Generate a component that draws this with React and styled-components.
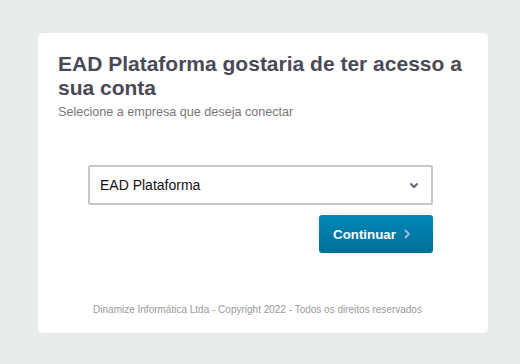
import React from 'react'
import styled, { createGlobalStyle } from 'styled-components'

const Global = createGlobalStyle`
  html, body {
    margin: 0;
    padding: 0;
    background: #e9eced;
    font-family: "Liberation Sans", Arial, sans-serif;
  }
`

const Page = styled.div`
  width: 520px;
  height: 364px;
  padding: 33px 32px 0 38px;
  box-sizing: border-box;
`

const Card = styled.div`
  width: 450px;
  height: 300px;
  background: #fff;
  border-radius: 5px;
  box-sizing: border-box;
  padding: 19px 20px 0 20px;
  display: flex;
  flex-direction: column;
`

const Title = styled.h1`
  margin: 0;
  font-size: 21px;
  line-height: 24px;
  font-weight: bold;
  color: #4a4a57;
`

const Subtitle = styled.p`
  margin: 5px 0 0;
  font-size: 12.6px;
  line-height: 15px;
  color: #777;
`

const Form = styled.div`
  margin: 45px 35px 0 30px;
  display: flex;
  flex-direction: column;
  align-items: flex-end;
`

const Select = styled.div`
  align-self: stretch;
  height: 40px;
  box-sizing: border-box;
  border: 2px solid #c4c8cc;
  border-radius: 2px;
  display: flex;
  align-items: center;
  justify-content: space-between;
  padding: 0 12px 0 10px;
  font-size: 14px;
  color: #111;
`

const Button = styled.button`
  margin-top: 10px;
  width: 114px;
  height: 38px;
  border: none;
  border-radius: 3px;
  background: linear-gradient(#0089b8, #006e98);
  color: #fff;
  font-family: inherit;
  font-size: 13.3px;
  font-weight: bold;
  display: flex;
  align-items: center;
  justify-content: center;
  gap: 7px;
  padding: 0 8px 0 0;
`

const Footer = styled.div`
  margin-top: auto;
  margin-bottom: 18px;
  padding-right: 11px;
  text-align: center;
  font-size: 10px;
  color: #999;
`

const Chevron = ({ dir = 'down', color, size = 8 }) =>
  dir === 'down' ? (
    <svg width={size + 2} height={size} viewBox="0 0 10 8">
      <path d="M1.5 2.5 L5 6 L8.5 2.5" fill="none" stroke={color} strokeWidth="2" />
    </svg>
  ) : (
    <svg width={size} height={size + 4} viewBox="0 0 8 12">
      <path d="M2 2 L6 6 L2 10" fill="none" stroke={color} strokeWidth="1.8" />
    </svg>
  )

export default function App() {
  return (
    <Page>
      <Global />
      <Card>
        <Title>EAD Plataforma gostaria de ter acesso a sua conta</Title>
        <Subtitle>Selecione a empresa que deseja conectar</Subtitle>
        <Form>
          <Select>
            <span>EAD Plataforma</span>
            <Chevron color="#5b6370" />
          </Select>
          <Button>
            Continuar
            <Chevron dir="right" color="#9cc3d6" />
          </Button>
        </Form>
        <Footer>Dinamize Informática Ltda - Copyright 2022 - Todos os direitos reservados</Footer>
      </Card>
    </Page>
  )
}
